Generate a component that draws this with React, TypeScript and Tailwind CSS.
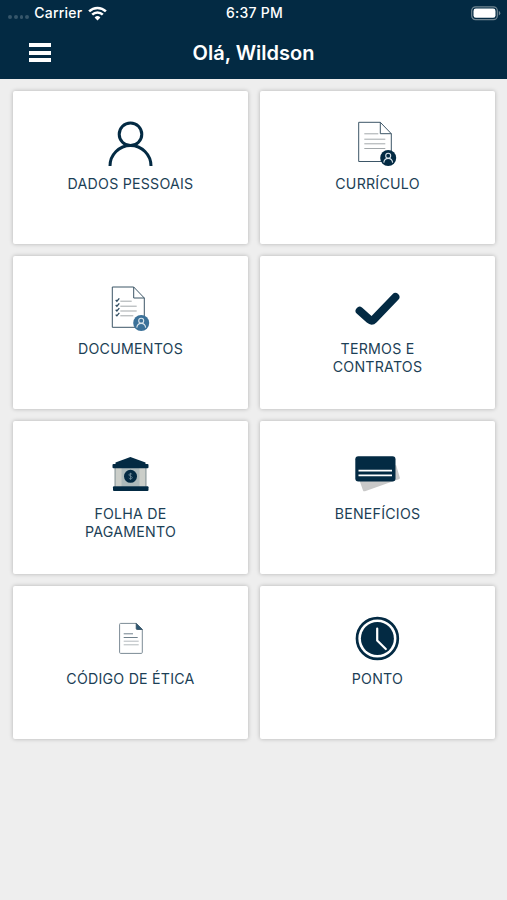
import React from "react";

const NAVY = "#032a43";

function PersonIcon() {
  return (
    <svg width="45" height="45" viewBox="0 0 45 45" fill="none" stroke={NAVY} strokeWidth="3">
      <circle cx="22.5" cy="13.3" r="11.3" />
      <path d="M2 45a20.5 20.5 0 0 1 41 0" />
    </svg>
  );
}

function Badge({ color }: { color: string }) {
  return (
    <g>
      <circle cx="33.2" cy="37" r="8" fill={color} />
      <g fill="none" stroke="#dbe5ec" strokeWidth="1.1">
        <circle cx="33.2" cy="34.7" r="2.5" />
        <path d="M28.8 41.6c.3-2.7 2-4.2 4.4-4.2s4.1 1.5 4.4 4.2" />
      </g>
    </g>
  );
}

function ResumeIcon() {
  return (
    <svg width="45" height="45" viewBox="0 0 45 45" fill="none">
      <path d="M25.3 1.3H3.7v39.2h32.6V12.7L25.3 1.3v11.4h11" stroke="#3d5667" />
      <path d="M9.3 12.8h14M9.3 18.2h21M9.3 22.8h21M9.3 27.5h21" stroke="#a3a8ab" />
      <Badge color={NAVY} />
    </svg>
  );
}

function DocumentsIcon() {
  return (
    <svg width="45" height="45" viewBox="0 0 45 45" fill="none">
      <path d="M25.7 1H4.3v40.3h32V12L25.7 1v11h10.6" stroke="#3d5667" />
      <path d="M12.3 15.2h11.4M12.3 20.2h16.4M12.3 25h16.4M12.3 29.8h13" stroke="#a3a8ab" />
      <path
        d="M7.7 14l1.2 1.2 2.4-2.9M7.7 19l1.2 1.2 2.4-2.9M7.7 23.8l1.2 1.2 2.4-2.9M7.7 28.6l1.2 1.2 2.4-2.9"
        stroke="#2f4c60"
        strokeWidth="1.3"
      />
      <Badge color="#3b7199" />
    </svg>
  );
}

function CheckIcon() {
  return (
    <svg width="45" height="45" viewBox="0 0 45 45" fill="none">
      <path
        d="M4.6 24.8L14.4 33.6q2.3 2 4.5-.2L40.4 11"
        stroke={NAVY}
        strokeWidth="8"
        strokeLinecap="round"
        strokeLinejoin="round"
      />
    </svg>
  );
}

function BankIcon() {
  return (
    <svg width="45" height="45" viewBox="0 0 45 45">
      <path d="M6.5 17h32v18.5h-32z" fill="#cbcec9" />
      <path d="M13.5 17h18v18.5h-18z" fill="#aebabb" />
      <path d="M6.5 17h1.5v18.5H6.5zM37 17h1.5v18.5H37z" fill="#a2acad" />
      <path d="M22.4 6L37.5 11.5v1.6h-30v-1.6z" fill={NAVY} />
      <rect x="4.5" y="12.9" width="36" height="4.3" rx="1" fill={NAVY} />
      <rect x="5" y="35.3" width="35.5" height="4.6" rx="1" fill={NAVY} />
      <circle cx="22.5" cy="25.3" r="6.5" fill={NAVY} />
      <path
        d="M24.2 23.5c-.6-1.1-3.3-1.1-3.3.4 0 1.7 3.4 1 3.4 2.8 0 1.5-2.9 1.5-3.5.3M22.5 21.8v7"
        fill="none"
        stroke="#7590a0"
        strokeWidth="0.8"
      />
    </svg>
  );
}

function CardsIcon() {
  return (
    <svg width="45" height="45" viewBox="0 0 45 45">
      <path d="M38 14.5l3.2-.3L44.8 26.5q.4 1.3-1 1.8L10 40.2q-1.5.5-2-.8L4 28z" fill="#c9c9c9" />
      <rect x="0.3" y="5.2" width="40.2" height="25.3" rx="3" fill={NAVY} />
      <path d="M3.5 19.6H37M3.5 24.4H37" stroke="#fff" strokeWidth="1.7" />
    </svg>
  );
}

function EthicsIcon() {
  return (
    <svg width="45" height="45" viewBox="0 0 45 45" fill="none">
      <path d="M28.2 7.4H12.6q-1 0-1 1v28q0 1 1 1h20.7q1 0 1-1V13.5z" stroke="#7c8b95" />
      <path d="M28.2 7.4v5.1q0 1 1 1h5.1z" fill="#2f5873" stroke="#2f4c60" strokeWidth="0.8" />
      <path d="M15.7 17.8H25M15.7 21.5h14" stroke="#71818c" />
      <path d="M15.7 25.2h15M15.7 28.8h15" stroke="#b3b9bd" />
    </svg>
  );
}

function ClockIcon() {
  return (
    <svg width="45" height="45" viewBox="0 0 45 45" fill="none">
      <circle cx="22.4" cy="22.5" r="20.4" stroke={NAVY} strokeWidth="2.7" />
      <circle cx="22.4" cy="22.5" r="16.5" fill={NAVY} />
      <path d="M22.2 12.5v12l8.6 8.5" stroke="#fff" strokeWidth="2.2" strokeLinecap="round" strokeLinejoin="round" />
    </svg>
  );
}

interface MenuItem {
  lines: string[];
  icon: React.ReactNode;
}

const items: MenuItem[] = [
  { lines: ["DADOS PESSOAIS"], icon: <PersonIcon /> },
  { lines: ["CURRÍCULO"], icon: <ResumeIcon /> },
  { lines: ["DOCUMENTOS"], icon: <DocumentsIcon /> },
  { lines: ["TERMOS E", "CONTRATOS"], icon: <CheckIcon /> },
  { lines: ["FOLHA DE", "PAGAMENTO"], icon: <BankIcon /> },
  { lines: ["BENEFÍCIOS"], icon: <CardsIcon /> },
  { lines: ["CÓDIGO DE ÉTICA"], icon: <EthicsIcon /> },
  { lines: ["PONTO"], icon: <ClockIcon /> },
];

function StatusBar() {
  return (
    <div className="grid h-[26px] grid-cols-3 items-center pl-2 pr-[6px] text-[14px] font-medium leading-none tracking-[0.25px]">
      <div className="flex items-center">
        <div className="mt-2 flex gap-[2px]">
          {[0, 1, 2, 3].map((dot) => (
            <span key={dot} className="h-[3.5px] w-[3.8px] rounded-full bg-[#36566a]" />
          ))}
        </div>
        <span className="ml-[5px]">Carrier</span>
        <svg className="ml-[5px]" width="19" height="15" viewBox="0 0 19 15" fill="none" stroke="#fff" strokeWidth="2.5">
          <path d="M1.1 5.4a12 12 0 0 1 16.8 0M4.2 8.6a7.5 7.5 0 0 1 10.6 0" />
          <path d="M9.5 14.5L6.6 11.5a4.2 4.2 0 0 1 5.8 0z" fill="#fff" stroke="none" />
        </svg>
      </div>
      <span className="text-center">6:37 PM</span>
      <div className="flex justify-end">
        <svg width="30" height="15" viewBox="0 0 30 15">
          <rect x="0.7" y="0.8" width="25.6" height="12.8" rx="3.8" fill="none" stroke="#718692" strokeWidth="1.2" />
          <rect x="2.5" y="2.6" width="22" height="9.2" rx="2.3" fill="#fff" />
          <path d="M27.8 5q1.5.6 1.5 2.2t-1.5 2.2z" fill="#718692" />
        </svg>
      </div>
    </div>
  );
}

export default function App() {
  return (
    <div className="min-h-[900px] w-full bg-[#eeeeee] font-['Inter','Liberation_Sans',sans-serif]">
      <header className="h-[79px] bg-[#032a43] text-white">
        <StatusBar />
        <div className="grid h-[53px] grid-cols-[80px_1fr_80px] items-center">
          <button className="flex flex-col gap-[3.5px] pl-[29px]" aria-label="Menu">
            <span className="h-1 w-[22px] bg-white" />
            <span className="h-1 w-[22px] bg-white" />
            <span className="h-1 w-[22px] bg-white" />
          </button>
          <h1 className="text-center text-[20px] font-semibold leading-none">Olá, Wildson</h1>
        </div>
      </header>

      <main className="grid grid-cols-2 gap-3 pl-[13px] pr-3 pt-3">
        {items.map((item) => (
          <div
            key={item.lines[0]}
            className="flex h-[153px] flex-col items-center rounded-[2px] bg-white pt-[30px] shadow-[0_0_4px_rgba(0,0,0,0.25)]"
          >
            {item.icon}
            <p className="mt-[9px] text-center text-[14.2px] leading-[17.5px] tracking-[0.23px] text-[#1c3f56]">
              {item.lines.map((line) => (
                <span key={line} className="block">
                  {line}
                </span>
              ))}
            </p>
          </div>
        ))}
      </main>
    </div>
  );
}
